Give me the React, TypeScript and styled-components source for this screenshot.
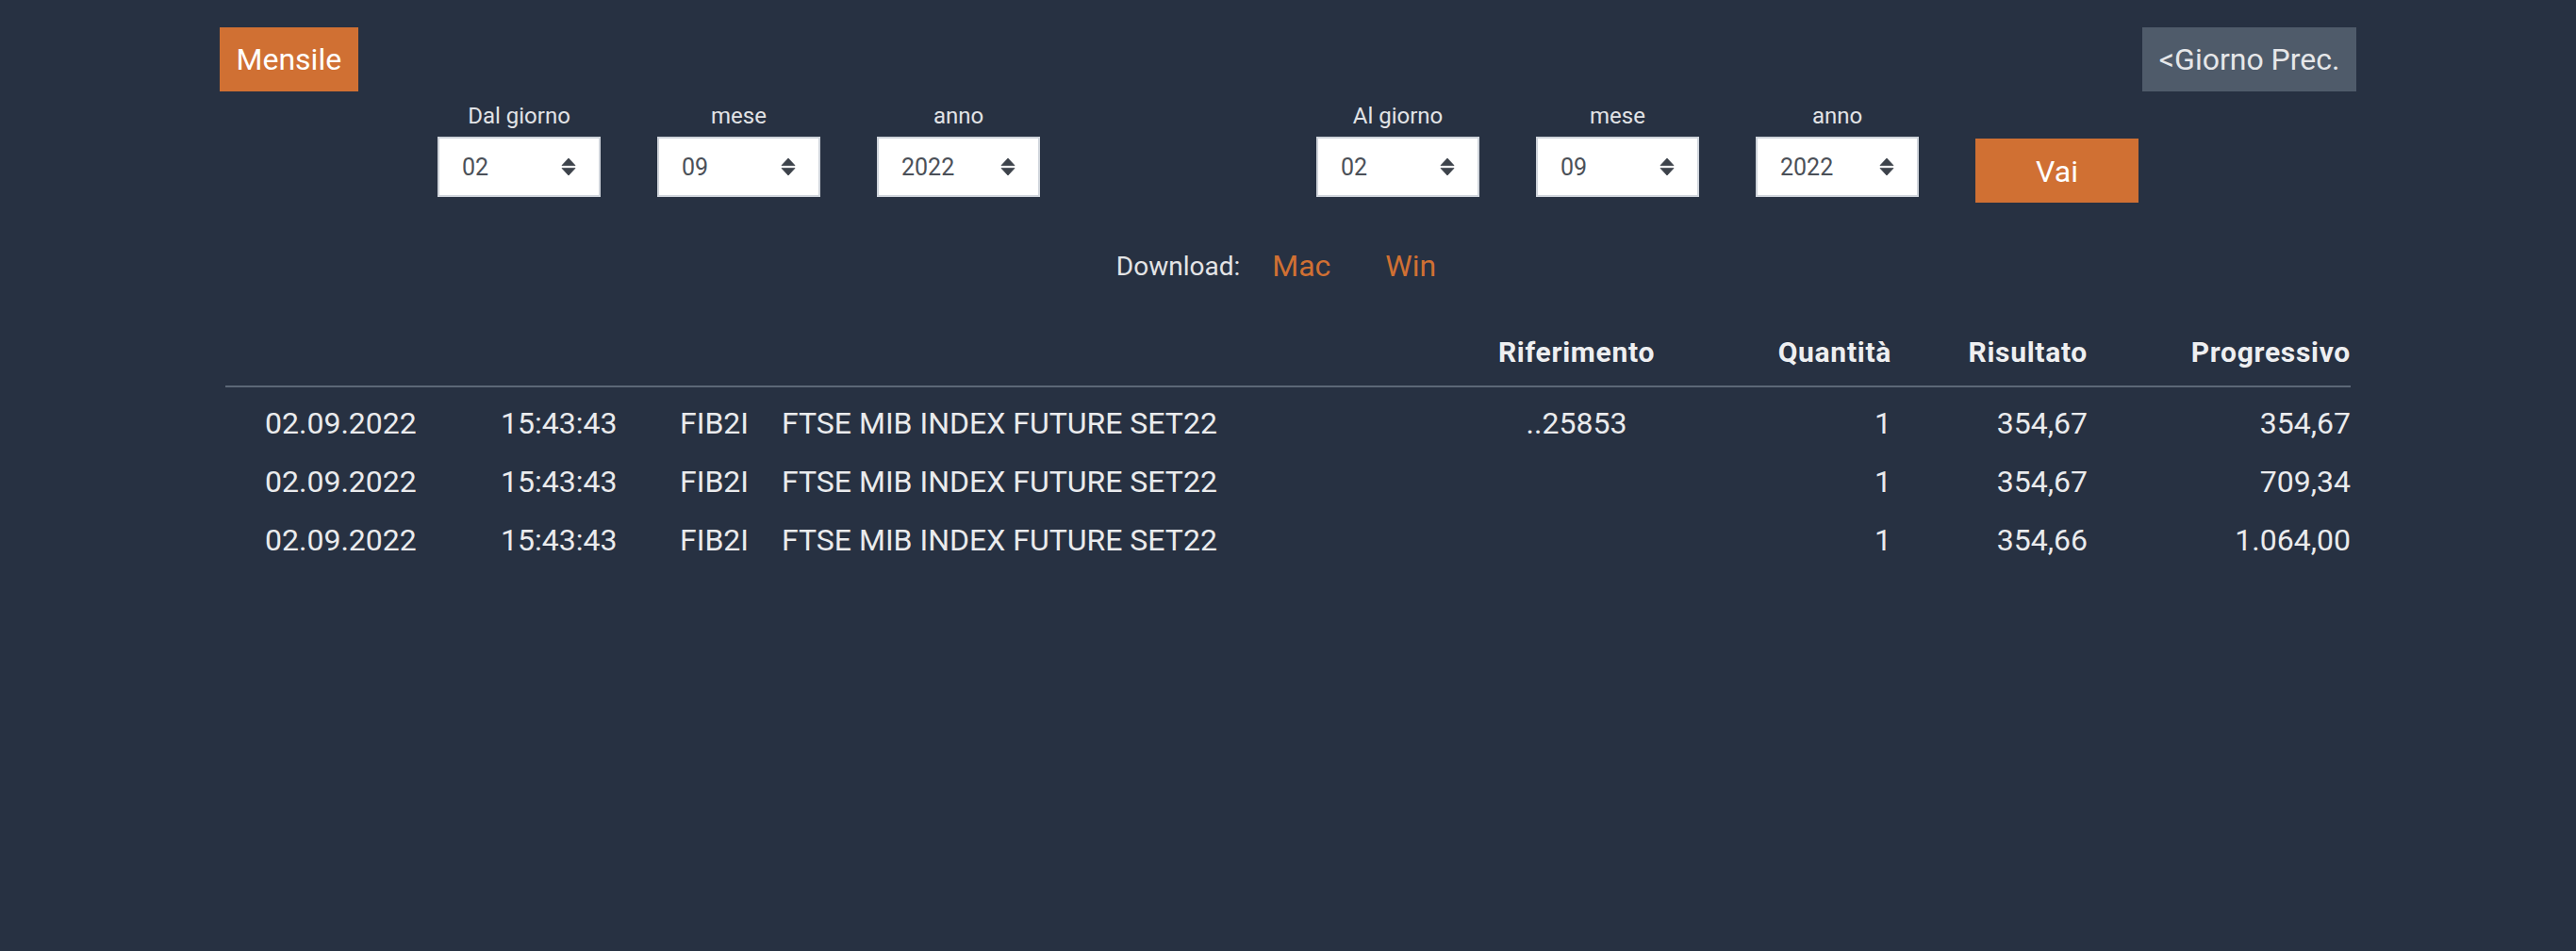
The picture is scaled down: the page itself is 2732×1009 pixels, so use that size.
import React from "react";
import styled, { createGlobalStyle } from "styled-components";

const GlobalStyle = createGlobalStyle`
  html, body {
    margin: 0;
    padding: 0;
    background: #273142;
  }
  body {
    font-family: Roboto, "Liberation Sans", sans-serif;
  }
  * { box-sizing: border-box; }
`;

const Page = styled.div`
  width: 2266px;
  min-height: 1009px;
  margin: 0 auto;
  padding-top: 29px;
`;

const TopBar = styled.div`
  display: flex;
  justify-content: space-between;
  align-items: flex-start;
`;

const ActionButton = styled.button<{ $tone: "orange" | "gray"; $width?: number }>`
  height: 68px;
  ${(p) => (p.$width ? `width: ${p.$width}px;` : "padding: 0 17.5px;")}
  border: 0;
  border-radius: 0;
  margin: 0;
  font-family: Roboto, "Liberation Sans", sans-serif;
  font-size: 32px;
  line-height: 68px;
  background: ${(p) => (p.$tone === "orange" ? "#d07033" : "#4f5b6a")};
  color: ${(p) => (p.$tone === "orange" ? "#ffffff" : "#e6e7e9")};
  cursor: pointer;
  white-space: nowrap;
`;

const FieldsGrid = styled.div`
  display: grid;
  grid-template-columns: repeat(8, 233px);
  justify-content: center;
  align-items: start;
  margin-top: 12px;
`;

const Field = styled.div`
  display: flex;
  flex-direction: column;
  align-items: center;
`;

const FieldLabel = styled.div`
  font-size: 24px;
  line-height: 28px;
  color: #e1e3e6;
  margin-bottom: 8px;
`;

const SelectBox = styled.div`
  width: 173px;
  height: 64px;
  border: 2px solid #cfd4db;
  background: #ffffff;
  display: flex;
  align-items: center;
  justify-content: space-between;
  padding: 0 24px 0 24px;
  font-size: 25px;
  color: #4b5058;
`;

const GoCell = styled.div`
  display: flex;
  justify-content: center;
  padding-top: 38px;
`;

const DownloadRow = styled.div`
  display: flex;
  justify-content: center;
  align-items: center;
  margin-top: 43px;
  height: 48px;
  padding-left: 4px;
`;

const DownloadLabel = styled.span`
  font-size: 28px;
  color: #e3e4e6;
  margin-right: 5px;
`;

const DownloadLink = styled.a`
  font-size: 32px;
  line-height: 48px;
  color: #d07033;
  padding: 0 29px;
  text-decoration: none;
`;

const Table = styled.div`
  margin-top: 33px;
  padding: 0 6px;
`;

const COLS = "271px 190px 108px 746px 236px 216px 208px 279px";

const HeadRow = styled.div`
  display: grid;
  grid-template-columns: ${COLS};
  border-bottom: 2px solid #5c6777;
  padding: 14px 0;
`;

const HeadCell = styled.div<{ $align: "left" | "center" | "right" }>`
  font-size: 30px;
  font-weight: 700;
  line-height: 42px;
  letter-spacing: 0.7px;
  color: #eeeff1;
  text-align: ${(p) => p.$align};
  white-space: nowrap;
`;

const Body = styled.div`
  padding-top: 7px;
`;

const Row = styled.div`
  display: grid;
  grid-template-columns: ${COLS};
  padding: 7px 0;
`;

const Cell = styled.div<{ $align: "left" | "center" | "right"; $pad?: number }>`
  font-size: 32px;
  line-height: 48px;
  color: #eaebed;
  text-align: ${(p) => p.$align};
  padding-left: ${(p) => p.$pad ?? 0}px;
  white-space: nowrap;
`;

const SortIcon = () => (
  <svg width="16" height="20" viewBox="0 0 16 20" aria-hidden="true">
    <path d="M8 1 L15 8.6 H1 Z" fill="#3d434b" strokeLinejoin="round" stroke="#3d434b" strokeWidth="0.8" />
    <path d="M1 11.4 H15 L8 19 Z" fill="#3d434b" strokeLinejoin="round" stroke="#3d434b" strokeWidth="0.8" />
  </svg>
);

type FieldDef = { label: string; value: string } | null;

const fields: FieldDef[] = [
  { label: "Dal giorno", value: "02" },
  { label: "mese", value: "09" },
  { label: "anno", value: "2022" },
  null,
  { label: "Al giorno", value: "02" },
  { label: "mese", value: "09" },
  { label: "anno", value: "2022" },
];

const rows = [
  { date: "02.09.2022", time: "15:43:43", sym: "FIB2I", desc: "FTSE MIB INDEX FUTURE SET22", ref: "..25853", qty: "1", res: "354,67", prog: "354,67" },
  { date: "02.09.2022", time: "15:43:43", sym: "FIB2I", desc: "FTSE MIB INDEX FUTURE SET22", ref: "", qty: "1", res: "354,67", prog: "709,34" },
  { date: "02.09.2022", time: "15:43:43", sym: "FIB2I", desc: "FTSE MIB INDEX FUTURE SET22", ref: "", qty: "1", res: "354,66", prog: "1.064,00" },
];

export default function App() {
  return (
    <>
      <GlobalStyle />
      <Page>
        <TopBar>
          <ActionButton $tone="orange">Mensile</ActionButton>
          <ActionButton $tone="gray">&lt;Giorno Prec.</ActionButton>
        </TopBar>

        <FieldsGrid>
          {fields.map((f, i) =>
            f ? (
              <Field key={i}>
                <FieldLabel>{f.label}</FieldLabel>
                <SelectBox>
                  <span>{f.value}</span>
                  <SortIcon />
                </SelectBox>
              </Field>
            ) : (
              <div key={i} />
            )
          )}
          <GoCell>
            <ActionButton $tone="orange" $width={173}>Vai</ActionButton>
          </GoCell>
        </FieldsGrid>

        <DownloadRow>
          <DownloadLabel>Download:</DownloadLabel>
          <DownloadLink href="#">Mac</DownloadLink>
          <DownloadLink href="#">Win</DownloadLink>
        </DownloadRow>

        <Table>
          <HeadRow>
            <HeadCell $align="left" />
            <HeadCell $align="left" />
            <HeadCell $align="left" />
            <HeadCell $align="left" />
            <HeadCell $align="center">Riferimento</HeadCell>
            <HeadCell $align="right">Quantità</HeadCell>
            <HeadCell $align="right">Risultato</HeadCell>
            <HeadCell $align="right">Progressivo</HeadCell>
          </HeadRow>
          <Body>
            {rows.map((r, i) => (
              <Row key={i}>
                <Cell $align="left" $pad={42}>{r.date}</Cell>
                <Cell $align="left" $pad={21}>{r.time}</Cell>
                <Cell $align="left" $pad={21}>{r.sym}</Cell>
                <Cell $align="left" $pad={21}>{r.desc}</Cell>
                <Cell $align="center">{r.ref}</Cell>
                <Cell $align="right">{r.qty}</Cell>
                <Cell $align="right">{r.res}</Cell>
                <Cell $align="right">{r.prog}</Cell>
              </Row>
            ))}
          </Body>
        </Table>
      </Page>
    </>
  );
}
